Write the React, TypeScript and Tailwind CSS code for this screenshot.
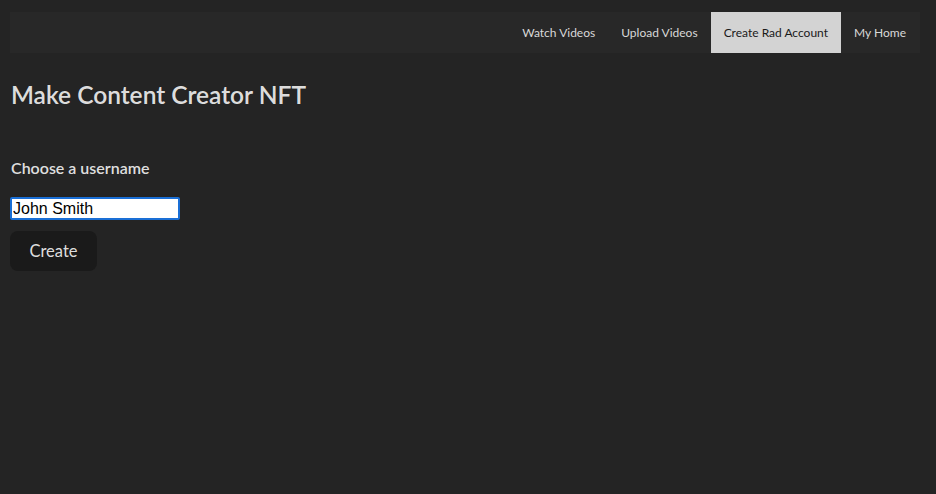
export default function App() {
  const tabs = ["Watch Videos", "Upload Videos", "Create Rad Account", "My Home"]
  const active = "Create Rad Account"

  return (
    <div className="min-h-screen bg-[#242424] px-[10px] pt-[12px] text-[rgba(255,255,255,0.87)] font-['Lato',sans-serif]">
      <nav className="flex h-[41px] w-[910px] justify-end bg-[#282828] pr-[1px]">
        {tabs.map((t) => (
          <a
            key={t}
            className={
              "flex items-center px-[13px] text-[12px] " +
              (t === active ? "bg-[#d3d3d3] text-[#1a1a1a]" : "text-[#d8d8d8]")
            }
          >
            {t}
          </a>
        ))}
      </nav>

      <h1 className="mt-[24px] text-[24.5px] font-semibold leading-[36px] pl-[1px]">Make Content Creator NFT</h1>

      <h3 className="mt-[43px] text-[16px] font-semibold leading-[24px] pl-[1px]">Choose a username</h3>

      <div className="mt-[17px] flex flex-col items-start gap-[11px]">
        <input
          defaultValue="John Smith"
          className="box-border h-[23px] w-[170px] rounded-[2px] border-2 border-[#1a6fd6] bg-white px-[1px] text-[16px] text-black outline-none font-['Liberation_Sans',sans-serif]"
        />
        <button className="h-[40px] w-[87px] rounded-[8px] bg-[#1a1a1a] text-[16.5px] text-[rgba(255,255,255,0.87)]">
          Create
        </button>
      </div>
    </div>
  )
}
